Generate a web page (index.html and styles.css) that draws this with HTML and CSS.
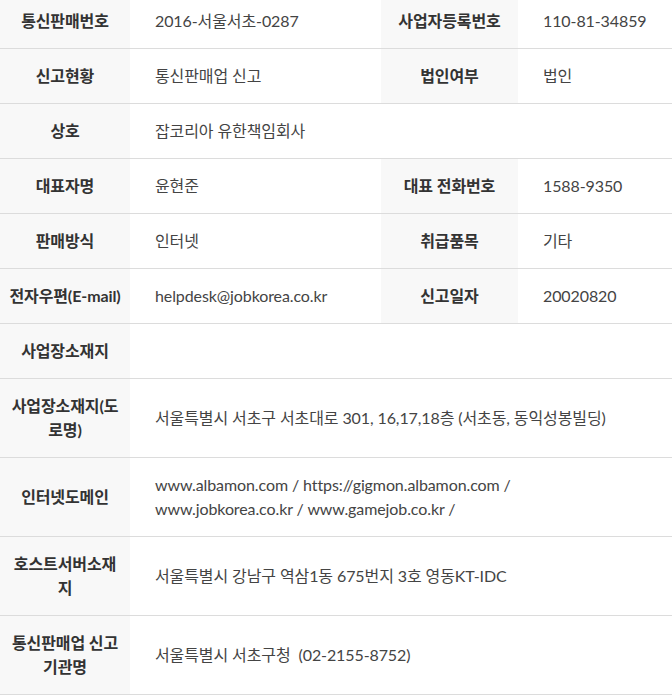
FILE: index.html
```html
<!DOCTYPE html>
<html lang="ko">
<head>
<meta charset="utf-8">
<link rel="stylesheet" href="styles.css">
</head>
<body>
<table class="info">
  <colgroup>
    <col class="c-label1">
    <col class="c-value1">
    <col class="c-label2">
    <col class="c-value2">
  </colgroup>
  <tbody>
    <tr><th>통신판매번호</th><td>2016-서울서초-0287</td><th>사업자등록번호</th><td>110-81-34859</td></tr>
    <tr><th>신고현황</th><td>통신판매업 신고</td><th>법인여부</th><td>법인</td></tr>
    <tr><th>상호</th><td colspan="3">잡코리아 유한책임회사</td></tr>
    <tr><th>대표자명</th><td>윤현준</td><th>대표 전화번호</th><td>1588-9350</td></tr>
    <tr><th>판매방식</th><td>인터넷</td><th>취급품목</th><td>기타</td></tr>
    <tr><th>전자우편(E-mail)</th><td>helpdesk@jobkorea.co.kr</td><th>신고일자</th><td>20020820</td></tr>
    <tr><th>사업장소재지</th><td colspan="3"></td></tr>
    <tr><th>사업장소재지(도로명)</th><td colspan="3">서울특별시 서초구 서초대로 301, 16,17,18층 (서초동, 동익성봉빌딩)</td></tr>
    <tr><th>인터넷도메인</th><td colspan="3">www.albamon.com / https://gigmon.albamon.com / <br>www.jobkorea.co.kr / www.gamejob.co.kr /</td></tr>
    <tr><th>호스트서버소재지</th><td colspan="3">서울특별시 강남구 역삼1동 675번지 3호 영동KT-IDC</td></tr>
    <tr><th>통신판매업 신고 기관명</th><td colspan="3">서울특별시 서초구청 &nbsp;(02-2155-8752)</td></tr>
  </tbody>
</table>
</body>
</html>
```
FILE: styles.css
```css
html, body {
  margin: 0;
  padding: 0;
  background: #fff;
}
body {
  font-family: Lato, "Noto Sans CJK KR", sans-serif;
  font-size: 16px;
  letter-spacing: -0.1px;
  color: #444;
  overflow: hidden;
}
.info {
  width: 672px;
  margin-top: -6px;
  border-collapse: collapse;
  table-layout: fixed;
  border-right: 1px solid #dcdcdc;
}
.c-label1 { width: 130px; }
.c-value1 { width: 251px; }
.c-label2 { width: 137px; }
.c-value2 { width: 154px; }
.info th,
.info td {
  border-bottom: 1px solid #dcdcdc;
  line-height: 24px;
  vertical-align: middle;
}
.info th {
  background: #f8f8f8;
  color: #333;
  font-weight: bold;
  text-align: center;
  padding: 15px 7px;
}
.info td {
  text-align: left;
  padding: 15px 10px 15px 25px;
  font-weight: normal;
}
```
